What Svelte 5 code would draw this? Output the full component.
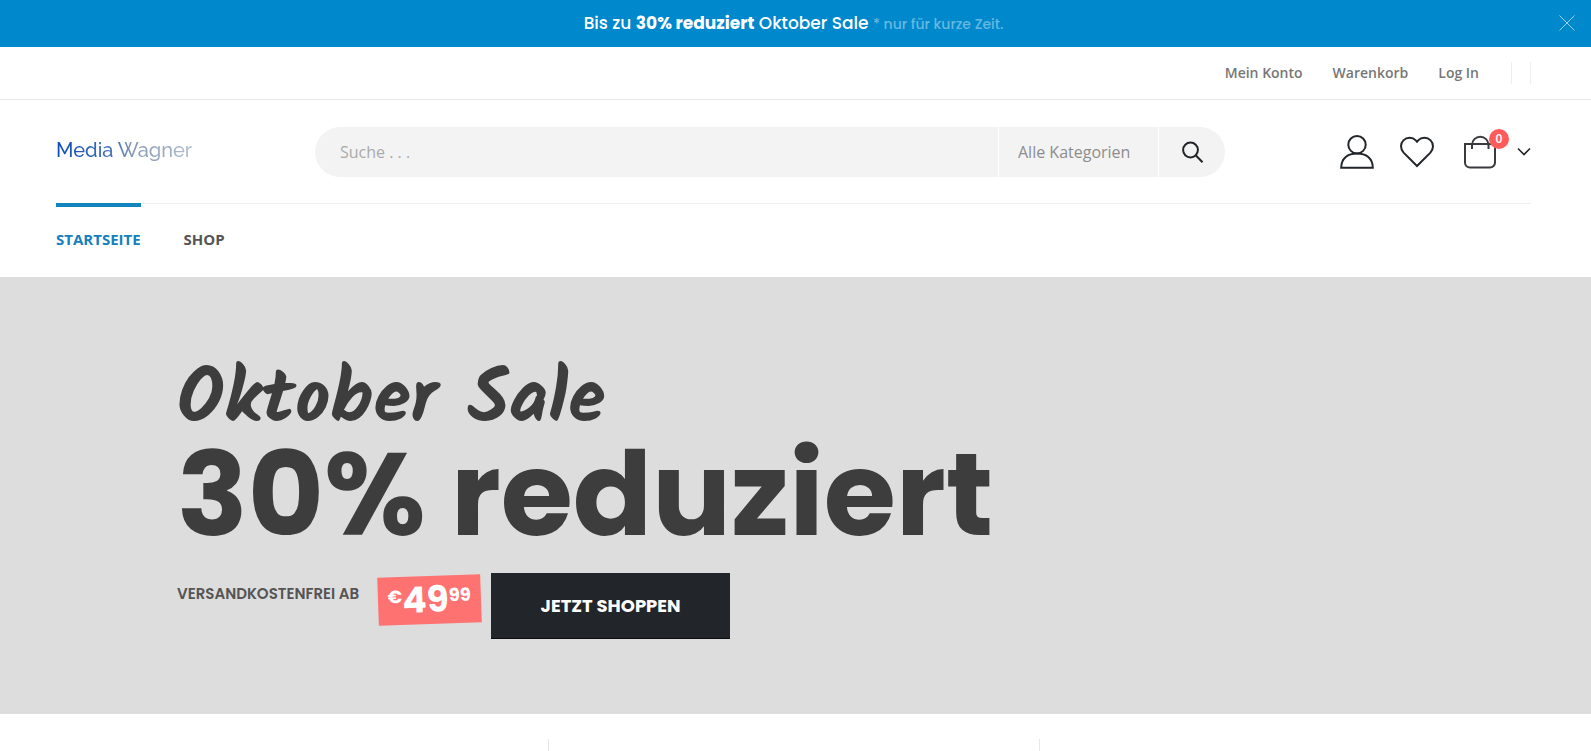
<script lang="ts">
	let bannerOpen = $state(true);
	let query = $state('');
	let category = $state('');

	const topLinks = ['Mein Konto', 'Warenkorb', 'Log In'];
	const menu = [
		{ label: 'Startseite', active: true },
		{ label: 'Shop', active: false }
	];
	const cartCount = 0;
</script>

{#if bannerOpen}
	<div class="banner">
		<p>Bis zu <b>30% reduziert</b> Oktober Sale <small>* nur für kurze Zeit.</small></p>
		<button class="close" aria-label="Schließen" onclick={() => (bannerOpen = false)}>
			<svg width="16" height="16" viewBox="0 0 16 16"><path d="M.5.5l15 15M15.5.5l-15 15" /></svg>
		</button>
	</div>
{/if}

<header>
	<div class="header-top container">
		<nav class="top-links">
			{#each topLinks as link}
				<a href="#top">{link}</a>
			{/each}
		</nav>
		<span class="separator"></span>
		<span class="separator"></span>
	</div>

	<div class="header-middle container">
		<a class="logo" href="#top">Media Wagner</a>
		<form class="search" onsubmit={(event) => event.preventDefault()}>
			<input type="search" aria-label="Suche" placeholder="Suche . . ." bind:value={query} />
			<select aria-label="Kategorie" bind:value={category}>
				<option value="">Alle Kategorien</option>
			</select>
			<button aria-label="Suchen">
				<svg width="22" height="22" viewBox="0 0 22 22">
					<circle cx="8.500" cy="9" r="7.4" />
					<path d="M13.700 14.2l6.800 7" />
				</svg>
			</button>
		</form>
		<div class="icons">
			<a href="#konto" aria-label="Mein Konto">
				<svg width="34" height="34" viewBox="0 0 34 34">
					<circle cx="17" cy="9.7" r="8.7" />
					<path d="M1.2 32.8C1.2 23 8 18.4 17 18.4S32.8 23 32.8 32.8z" />
				</svg>
			</a>
			<a href="#wunschliste" aria-label="Wunschliste">
				<svg width="34" height="34" viewBox="0 0 34 34">
					<path d="M17 31L3.6 17.6C.2 14 .2 8.600 3.400 5.400 6.800 2 12.600 2 15.800 5.400L17 6.800l1.200-1.400c3.200-3.400 9-3.400 12.400 0 3.200 3.200 3.200 8.600-.2 12.200z" />
				</svg>
			</a>
			<a class="cart" href="#warenkorb" aria-label="Warenkorb">
				<svg class="bag" width="32" height="34" viewBox="0 0 32 34">
					<path d="M1 9h30v18.500a5 5 0 0 1-5 5H6a5 5 0 0 1-5-5z" />
					<path d="M8 14V10a8 8 0 0 1 16.500 0v4" />
				</svg>
				<span class="badge">{cartCount}</span>
				<svg class="chevron" width="14" height="10" viewBox="0 0 14 10"><path d="M1 1.500l6 6 6-6" /></svg>
			</a>
		</div>
	</div>

	<div class="container">
		<nav class="menu">
			{#each menu as item}
				<a href="#top" class:active={item.active}>{item.label}</a>
			{/each}
		</nav>
	</div>
</header>

<main>
	<section class="hero">
		<h2>Oktober Sale</h2>
		<h1>30% reduziert</h1>
		<div class="offer">
			<h3>Versandkostenfrei ab</h3>
			<span class="price"><sup>€</sup><b>49</b><sup>99</sup></span>
			<button>Jetzt shoppen</button>
		</div>
	</section>

	<section class="container info">
		<div></div>
		<div></div>
		<div></div>
	</section>
</main>

<style>
	:global(body) {
		margin: 0;
		background: #fff;
		color: #777;
		font-family: 'Open Sans', sans-serif;
		font-size: 14px;
	}

	a {
		color: inherit;
		text-decoration: none;
	}

	button {
		padding: 0;
		border: 0;
		cursor: pointer;
	}

	svg {
		display: block;
		fill: none;
		stroke: #222529;
		stroke-width: 2;
	}

	.container {
		padding: 0 60px 0 56px;
	}

	.banner {
		position: relative;
		height: 47px;
		background: #08c;
		color: #fff;
		text-align: center;
		font-family: Poppins, Inter, sans-serif;
	}

	.banner p {
		margin: 0;
		padding-right: 4px;
		font-size: 17px;
		font-weight: 500;
		line-height: 46px;
	}

	.banner small {
		font-size: 14px;
		color: #66b8e0;
	}

	.close {
		position: absolute;
		top: 15px;
		right: 16px;
		background: none;
	}

	.close svg {
		stroke: #99d1eb;
		stroke-width: 1;
	}

	.header-top {
		display: flex;
		align-items: center;
		justify-content: flex-end;
		height: 52px;
		border-bottom: 1px solid #e7e7e7;
	}

	.top-links {
		display: flex;
		gap: 30px;
		margin-right: 32px;
		padding-bottom: 2px;
		font-weight: 600;
	}

	.separator {
		width: 1px;
		height: 22px;
		background: #eee;
	}

	.separator + .separator {
		margin-left: 18px;
	}

	.header-middle {
		display: flex;
		align-items: center;
		height: 103px;
	}

	.logo {
		width: 259px;
		padding-bottom: 4px;
		font-family: Raleway, Lato, sans-serif;
		font-size: 20px;
		font-weight: 500;
		background: linear-gradient(90deg, #0d4cbd 0, #4272b4 60px, #8398b3 75px, #b4c0cf 140px);
		background-clip: text;
		color: transparent;
	}

	.search {
		flex: 1;
		display: flex;
		gap: 1px;
		height: 50px;
		border-radius: 25px;
		overflow: hidden;
	}

	.search input,
	.search select,
	.search button {
		border: 0;
		border-radius: 0;
		background: #f3f3f3;
		color: #8d8d8d;
		font: 16px 'Open Sans', sans-serif;
		outline: none;
		appearance: none;
	}

	.search input {
		flex: 1;
		min-width: 0;
		padding: 0 25px;
	}

	.search input::placeholder {
		color: #aaa;
	}

	.search select {
		width: 159px;
		padding: 0 19px;
	}

	.search button {
		width: 66px;
		padding-left: 23px;
	}

	.icons {
		display: flex;
		align-items: center;
		gap: 26px;
		margin-left: 115px;
	}

	.cart {
		position: relative;
		display: flex;
		align-items: center;
		gap: 21px;
		margin-left: 4px;
	}

	.bag {
		stroke: #3a3a3e;
	}

	.chevron {
		stroke-width: 1.6;
	}

	.badge {
		position: absolute;
		top: -6px;
		left: 25px;
		width: 20px;
		border-radius: 50%;
		background: #ff5b5b;
		color: #fff;
		font-size: 12px;
		font-weight: 600;
		line-height: 20px;
		text-align: center;
	}

	.menu {
		display: flex;
		gap: 43px;
		border-top: 1px solid #f0f0f0;
		color: #555;
		font-size: 15px;
		font-weight: 700;
		line-height: 64px;
		text-transform: uppercase;
	}

	.menu a {
		margin-top: -1px;
		border-top: 4px solid transparent;
		padding-bottom: 6px;
	}

	.menu .active {
		border-color: #1385be;
		color: #1480bd;
	}

	.hero {
		padding: 98px 60px 75px 177px;
		background: #ddd;
		color: #3d3d3d;
		font-family: Poppins, Inter, sans-serif;
	}

	.hero h2 {
		margin: 0;
		font-family: 'Segoe Script', Kalam, Lato, cursive;
		font-size: 76px;
		font-weight: 700;
		line-height: 54px;
	}

	.hero h1 {
		margin: 0;
		font-size: 117px;
		font-weight: 700;
		line-height: 130px;
	}

	.offer {
		display: flex;
		align-items: flex-start;
		margin-top: 14px;
	}

	.offer h3 {
		margin: 11px 19px 0 0;
		color: #555;
		font-size: 15px;
		font-weight: 600;
		line-height: 20px;
		text-transform: uppercase;
	}

	.price {
		display: flex;
		align-items: flex-start;
		margin: 3px 10px 0 0;
		padding: 0 10px;
		background: #ff7272;
		color: #fff;
		font-weight: 700;
		transform: rotate(-2deg);
	}

	.price b {
		font-size: 36px;
		font-weight: 700;
		line-height: 48px;
	}

	.price sup {
		font-size: 18px;
		line-height: 40px;
	}

	.offer button {
		width: 239px;
		height: 66px;
		border-bottom: 1px solid #0c0d0e;
		background: #222529;
		color: #fff;
		font: 700 18px Poppins, Inter, sans-serif;
		text-transform: uppercase;
	}

	.info {
		display: grid;
		grid-template-columns: repeat(3, 1fr);
		padding-top: 25px;
	}

	.info div {
		min-height: 12px;
	}

	.info div + div {
		border-left: 1px solid #e7e7e7;
	}
</style>
